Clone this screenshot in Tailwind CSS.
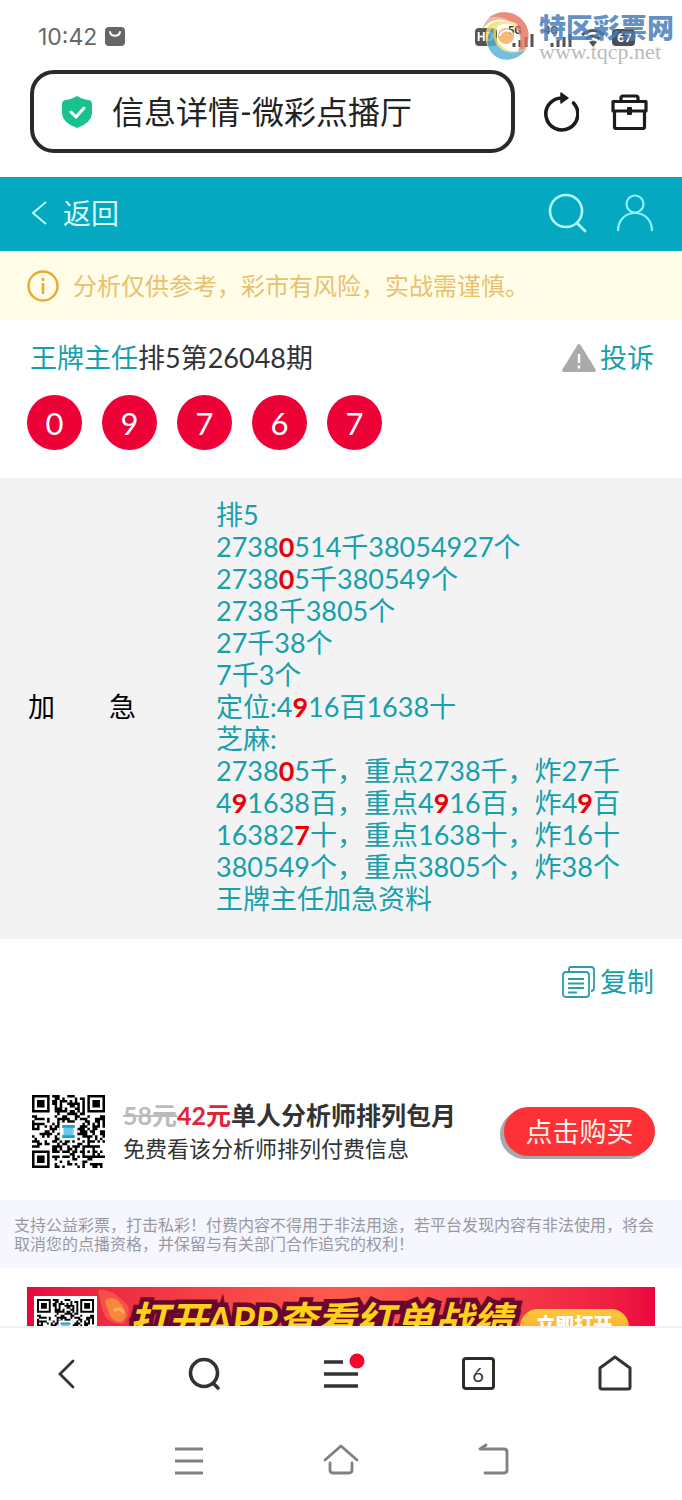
<!DOCTYPE html>
<html lang="zh-CN">
<head>
<meta charset="utf-8">
<meta name="viewport" content="width=device-width, initial-scale=1">
<title>信息详情-微彩点播厅</title>
<script src="https://cdn.jsdelivr.net/npm/@tailwindcss/browser@4"></script>
</head>
<body class="flex h-screen flex-col overflow-hidden bg-white font-[Lato,'Noto_Sans_CJK_SC',sans-serif] text-[27px] leading-8 text-[#333]">

<!-- phone status bar -->
<div class="relative flex h-[70px] shrink-0 items-center gap-2 pl-[38px] pr-[46px] pt-1">
  <time class="font-[Inter,sans-serif] text-[23px] text-[#666]">10:42</time>
  <svg class="size-5" viewBox="0 0 20 20" fill="none"><rect width="20" height="19" rx="4" fill="#666"/><path d="M5 5c1 5 9 5 10 0" stroke="#fff" stroke-width="2" stroke-linecap="round"/></svg>
  <svg class="ml-auto h-6 w-[162px]" viewBox="0 0 162 24" fill="none">
    <rect x="1" y="3" width="22" height="18" rx="4" fill="#555"/>
    <text x="3" y="16" font-family="Roboto" font-weight="700" font-size="12" fill="#fff">HD</text>
    <text x="34" y="9" font-family="Roboto" font-weight="700" font-size="11" fill="#333">5G</text>
    <path d="M40 22v-4M46 22v-7M52 22V12M58 22V9" stroke="#555" stroke-width="3"/>
    <text x="70" y="9" font-family="Roboto" font-weight="700" font-size="11" fill="#555">4G</text>
    <path d="M78 22v-4M84 22v-7M90 22V12M96 22V9" stroke="#555" stroke-width="3"/>
    <path d="M108 10q11-9 22 0M112 14q7-6 14 0" stroke="#555" stroke-width="3"/><path d="m115 17 4 5 4-5q-4-3-8 0Z" fill="#555"/>
    <rect x="138" y="4" width="23" height="17" rx="4" fill="#4c4f55"/>
    <text x="143" y="17" font-family="Roboto" font-weight="700" font-size="13" fill="#fff">67</text>
  </svg>
  <!-- site watermark -->
  <div class="absolute right-2 top-2 flex items-center gap-2">
    <svg class="h-14 w-[52px] opacity-80" viewBox="0 0 52 56" fill="none" stroke-linecap="round">
      <path d="M3 22C7 4 31-2 43 12c9 10 7 27-4 35 4-12 3-24-6-31C23 8 10 11 3 22Z" fill="#eba98c"/>
      <path d="M9 10C24-2 45 6 49 22c3 14-5 26-17 29 9-7 12-17 8-27C35 12 21 6 9 10Z" fill="#e5705f"/>
      <path d="M8 20c-5 14 3 29 17 31 10 2 20-3 23-12-9 7-21 5-27-3-6-7-5-16 1-23-6 0-11 2-14 7Z" fill="#f6dc62"/>
      <path d="M13 45c8 10 25 9 34-4-11 6-23 4-29-4-5-7-5-14-1-20-10 7-11 20-4 28Z" fill="#4fb0d8"/>
      <path d="M15 20c5-6 14-8 22-3" stroke="#f8df78" stroke-width="3"/>
      <circle cx="27" cy="28" r="8" fill="#f1a95b"/><path d="M21 27c2-5 9-6 12-2" stroke="#fff" stroke-width="2"/>
    </svg>
    <div class="flex flex-col">
      <span class="text-[27px] font-black leading-8 text-[#477db9]/85">特区彩票网</span>
      <span class="font-['Liberation_Serif',serif] text-[22px] leading-4 text-[#bbb]">www.tqcp.net</span>
    </div>
  </div>
</div>

<!-- browser address bar -->
<div class="flex shrink-0 items-center pb-6 pl-[30px] pr-[34px]">
  <label class="flex h-[83px] min-w-0 flex-1 items-center gap-5 rounded-3xl border-4 border-[#2a2a2a] pl-7">
    <svg class="h-8 w-[30px] shrink-0" viewBox="0 0 30 32" fill="none"><path d="M15 0q7 4 12 4 3 1 3 4v10q-1 9-15 14Q1 27 0 18V8q0-3 3-4 5 0 12-4Z" fill="#17c28c"/><path d="m9 16 5 5 8-9" stroke="#fff" stroke-width="3" stroke-linecap="round" stroke-linejoin="round"/></svg>
    <input class="min-w-0 flex-1 bg-transparent text-[32px] leading-10 text-[#222] outline-none" type="text" aria-label="网址" value="信息详情-微彩点播厅">
  </label>
  <button class="ml-7" aria-label="刷新"><svg class="h-10 w-9" viewBox="0 0 36 40" fill="none"><path d="M30.500 11A16 16 0 1 1 20 6" stroke="#1c1c1c" stroke-width="3.600" stroke-linecap="round"/><path d="m18 1 7 5-7 5Z" fill="#1c1c1c" stroke="#1c1c1c" stroke-width="1.500" stroke-linejoin="round"/></svg></button>
  <button class="ml-8" aria-label="工具箱"><svg class="h-9 w-[37px]" viewBox="0 0 37 36" fill="none" stroke="#1c1c1c" stroke-width="3.200" stroke-linejoin="round"><path d="M10 7V4q0-2 2-2h13q2 0 2 2v3M3.500 17v16q0 1.500 1.500 1.500h27q1.500 0 1.500-1.500V17M2 7.500h33V17H2Z"/><rect x="16" y="13" width="5" height="8" rx="1" fill="#1c1c1c" stroke="none"/></svg></button>
</div>

<main class="min-h-0 flex-1 overflow-hidden">
  <!-- page header -->
  <header class="flex h-[74px] items-center bg-[#04a8c1] pb-[2px] pl-8 pr-7">
    <a href="#" class="flex items-center gap-4 text-[28px] text-[#dcffff]">
      <svg class="h-6 w-[15px]" viewBox="0 0 15 24" fill="none" stroke="#b8f8ff" stroke-width="2"><path d="M14 1 1 12l13 11"/></svg>返回</a>
    <button class="ml-auto" aria-label="搜索"><svg class="size-10" viewBox="0 0 40 40" fill="none" stroke="#b4fbff" stroke-width="2.600" stroke-linecap="round"><circle cx="18" cy="18" r="16"/><path d="m29 30 8 8"/></svg></button>
    <button class="ml-7" aria-label="我的"><svg class="h-[38px] w-[38px]" viewBox="0 0 38 38" fill="none" stroke="#8df2fb" stroke-width="2.200"><circle cx="19" cy="10" r="8.500"/><path d="M2 37c0-24 34-24 34 0"/></svg></button>
  </header>

  <p class="flex h-[69px] items-center gap-[14px] bg-[#fffce8] pl-[27px] text-2xl text-[#e9c16c]">
    <svg class="size-8" viewBox="0 0 32 32" fill="none" stroke="#e8a92c" stroke-width="2.400"><circle cx="16" cy="16" r="14.500"/><path d="M16 13v11M16 8v3"/></svg>
    分析仅供参考，彩市有风险，实战需谨慎。</p>

  <section class="pb-7 pt-[22px]">
    <div class="flex items-center pl-[30px] pr-7">
      <h1><a href="#" class="text-[#16a0ae]">王牌主任</a>排5第26048期</h1>
      <a href="#" class="ml-auto flex items-center gap-1 text-[#16a0ae]">
        <svg class="h-7 w-[34px]" viewBox="0 0 34 28"><path d="M15.500 1q1.500-2 3 0L34 26q0 2-2 2H2q-2 0-2-2Z" fill="#aaa"/><path d="M17 10v9M17 21.500v3" stroke="#fff" stroke-width="2.400"/></svg>投诉</a>
    </div>
    <ol class="mt-[21px] flex gap-5 pl-[27px] text-[31px] text-white">
      <li class="grid size-[55px] place-items-center rounded-full bg-[#ec0236]">0</li>
      <li class="grid size-[55px] place-items-center rounded-full bg-[#ec0236]">9</li>
      <li class="grid size-[55px] place-items-center rounded-full bg-[#ec0236]">7</li>
      <li class="grid size-[55px] place-items-center rounded-full bg-[#ec0236]">6</li>
      <li class="grid size-[55px] place-items-center rounded-full bg-[#ec0236]">7</li>
    </ol>
  </section>

  <section class="flex items-center bg-[#f3f3f3] pb-6 pt-[21px]">
    <h2 class="w-[216px] shrink-0 pl-7 text-black">加　　急</h2>
    <p class="whitespace-nowrap text-[#16a0ae]">排5<br>
      2738<b class="text-[#e8000b]">0</b>514千38054927个<br>
      2738<b class="text-[#e8000b]">0</b>5千380549个<br>
      2738千3805个<br>
      27千38个<br>
      7千3个<br>
      定位:4<b class="text-[#e8000b]">9</b>16百1638十<br>
      芝麻:<br>
      2738<b class="text-[#e8000b]">0</b>5千，重点2738千，炸27千<br>
      4<b class="text-[#e8000b]">9</b>1638百，重点4<b class="text-[#e8000b]">9</b>16百，炸4<b class="text-[#e8000b]">9</b>百<br>
      16382<b class="text-[#e8000b]">7</b>十，重点1638十，炸16十<br>
      380549个，重点3805个，炸38个<br>
      王牌主任加急资料</p>
  </section>

  <div class="flex justify-end pr-7 pt-[27px]">
    <button class="flex items-center gap-[5px] text-[#16a0ae]">
      <svg class="h-8 w-[33px]" viewBox="0 0 33 32" fill="none" stroke="#2b9dac" stroke-width="1.800"><rect x="1" y="6" width="26" height="25" rx="3"/><path d="M7 5V3q0-2 2-2h20q3 0 3 3v18q0 3-3 3"/><path d="M6 13h16M6 17.500h16M6 22h16M6 26.500h9" stroke-width="2"/></svg>复制</button>
  </div>

  <!-- monthly plan -->
  <section class="flex items-center pb-8 pl-8 pr-[27px] pt-[97px]">
    <svg class="qr size-[73px] shrink-0" viewBox="0 0 29 29" role="img" aria-label="二维码"></svg>
    <div class="ml-[18px] whitespace-nowrap">
      <p class="text-[25px] font-bold leading-[34px]"><del class="text-[#bbb]">58元</del><span class="text-[#e52236]">42元</span>单人分析师排列包月</p>
      <p class="text-[22px] leading-[34px]">免费看该分析师排列付费信息</p>
    </div>
    <button class="ml-auto h-[49px] w-[151px] rounded-full bg-[#fe3136] text-[#fff2ed] shadow-[-4px_3px_0_#a7a9ad]">点击购买</button>
  </section>

  <p class="h-[68px] bg-[#f6f6fe] px-[14px] pt-[15px] text-base leading-[19px] text-[#9998a0]">支持公益彩票，打击私彩！付费内容不得用于非法用途，若平台发现内容有非法使用，将会<br>取消您的点播资格，并保留与有关部门合作追究的权利！</p>

  <!-- app download banner, runs on below the fold -->
  <a href="#" class="mx-[27px] mt-[19px] flex h-20 items-start overflow-hidden bg-linear-to-r from-[#e7063d] via-[#ff5a4c] to-[#ec0440] pl-[7px] pt-[9px]">
    <span class="bg-white p-[3px]"><svg class="qr size-[57px]" viewBox="0 0 29 29" role="img" aria-label="二维码"></svg></span>
    <svg class="-mt-2 h-10 w-8 shrink-0" viewBox="0 0 32 40"><path d="M1 2Q16 0 31 18q3 10-5 18Q8 36 5 20Z" fill="#f6504a"/><path d="M8 13q8-8 17 4 7 9 1 16-7 3-13-5Z" fill="#f8863f"/><path d="M17 23q5-5 10 2" fill="none" stroke="#fbb257" stroke-width="3"/></svg>
    <span class="whitespace-nowrap pt-1 text-[39px] font-bold italic leading-10 text-[#ffd119] [-webkit-text-stroke:9px_#68062f] [paint-order:stroke_fill]">打开APP查看红单战绩</span>
    <span class="ml-2 mt-[13px] h-11 w-[109px] shrink-0 rounded-[18px] bg-linear-to-b from-[#ffc83c] to-[#f49a20] text-center text-[19px] font-black leading-8 text-white">立即打开</span>
  </a>
</main>

<footer class="shrink-0 border-t-2 border-[#f0f0f0] bg-white">
  <nav class="flex h-[94px] items-center justify-between px-[47px] pb-[3px] text-[#333]" aria-label="浏览器">
    <button aria-label="后退"><svg class="size-10" viewBox="0 0 40 40" fill="none" stroke="currentColor" stroke-width="2.800" stroke-linecap="round"><path d="M26 7 13 20l13 13"/></svg></button>
    <button aria-label="搜索"><svg class="size-10" viewBox="0 0 40 40" fill="none" stroke="currentColor" stroke-width="3.600" stroke-linecap="round"><circle cx="20" cy="19" r="13.500"/><path d="m30 30 4 4"/></svg></button>
    <button aria-label="菜单"><svg class="size-10 overflow-visible" viewBox="0 0 40 40" fill="none" stroke="currentColor" stroke-width="3.600"><path d="M3 8h19M3 20h34M3 32h34"/><circle cx="36" cy="7" r="7.500" fill="#f5062c" stroke="none"/></svg></button>
    <button class="grid size-10 place-items-center" aria-label="6 个窗口"><span class="grid size-[33px] place-items-center rounded border-[3px] border-[#2c2c2c] text-xl leading-6">6</span></button>
    <button aria-label="主页"><svg class="size-10" viewBox="0 0 40 40" fill="none" stroke="currentColor" stroke-width="3" stroke-linejoin="round"><path d="M5 14 20 3l15 11v19q0 2-2 2H7q-2 0-2-2Z"/></svg></button>
  </nav>
  <nav class="flex h-[78px] items-start justify-center gap-28 pt-[18px] text-[#808080]" aria-label="系统">
    <button aria-label="最近任务"><svg class="size-10" viewBox="0 0 40 40" fill="none" stroke="currentColor" stroke-width="3"><path d="M6 9h28M6 21h28M6 33h28"/></svg></button>
    <button aria-label="桌面"><svg class="size-10" viewBox="0 0 40 40" fill="none" stroke="currentColor" stroke-width="2.800" stroke-linecap="round" stroke-linejoin="round"><path d="M4 20 20 6l16 14M9 23v7q0 3 3 3h16q3 0 3-3v-7"/></svg></button>
    <button aria-label="返回"><svg class="size-10" viewBox="0 0 40 40" fill="none" stroke="currentColor" stroke-width="2.800" stroke-linecap="round" stroke-linejoin="round"><path d="M13 5 7 9h24q3 0 3 3v18q0 3-3 3H12"/></svg></button>
  </nav>
</footer>

<script>
// Draws a 29x29 module code into every .qr element.
const N = 29;
let seed = 58421;
const rnd = () => {
  seed = (seed + 0x6d2b79f5) | 0;
  let t = Math.imul(seed ^ (seed >>> 15), 1 | seed);
  t = (t + Math.imul(t ^ (t >>> 7), 61 | t)) ^ t;
  return ((t ^ (t >>> 14)) >>> 0) / 4294967296;
};
const ring = (x, y, cx, cy) => Math.max(Math.abs(x - cx), Math.abs(y - cy));
let d = '';
for (let y = 0; y < N; y++) for (let x = 0; x < N; x++) {
  let on = rnd() > 0.49;
  for (const [cx, cy] of [[3, 3], [25, 3], [3, 25]]) {
    const r = ring(x, y, cx, cy);
    if (r <= 4) on = r === 3 || r <= 1;
  }
  const a = ring(x, y, 22, 22);
  if (a <= 2) on = a !== 1;
  if (on) d += `M${x} ${y}h1v1h-1z`;
}
const logo = '<rect x="11" y="11" width="7" height="7" fill="#fff"/><path d="M12 12.500h5M12 16.500h5" stroke="#1e9fd0" stroke-width="1.200"/><path d="M12.500 13h4v3h-4z" fill="#66cbea"/>';
document.querySelectorAll('.qr').forEach(s => { s.innerHTML = `<path d="${d}"/>` + logo; });
</script>
</body>
</html>
